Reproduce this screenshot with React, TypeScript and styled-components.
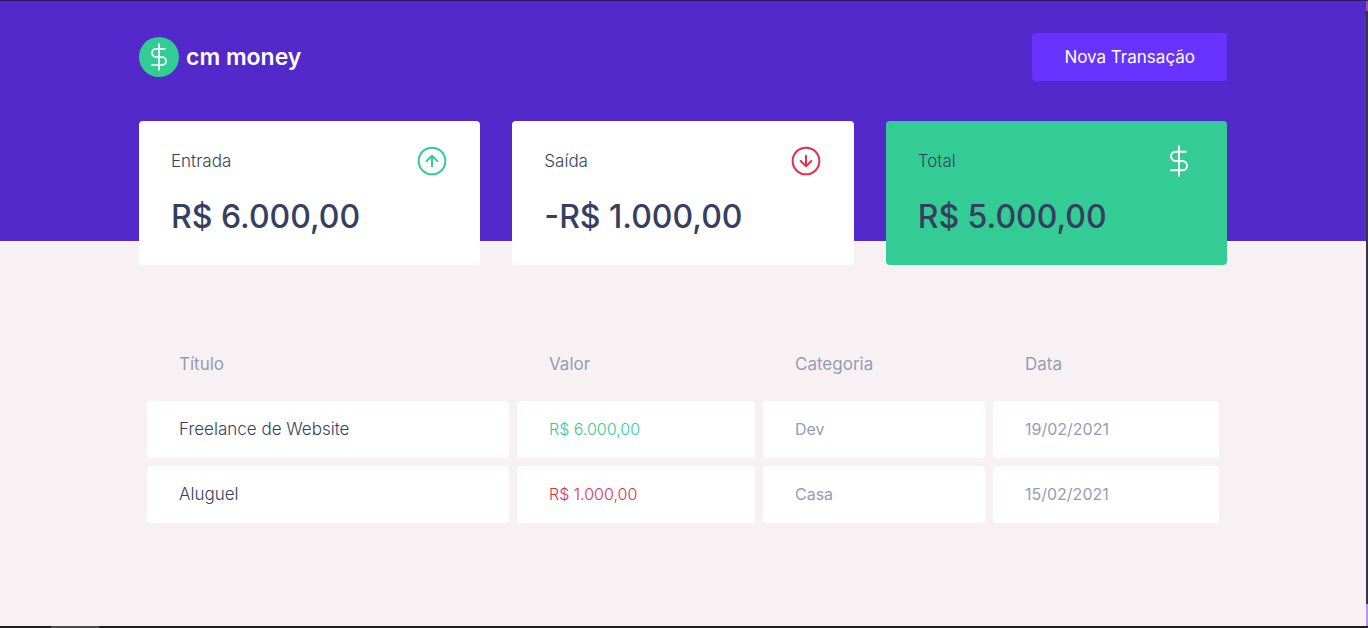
import React from "react";
import styled, { createGlobalStyle } from "styled-components";

const GlobalStyle = createGlobalStyle`
  * {
    margin: 0;
    padding: 0;
    box-sizing: border-box;
  }

  body {
    background: #f7f1f3;
    -webkit-font-smoothing: antialiased;
  }

  body, button {
    font-family: Inter, "Liberation Sans", sans-serif;
    font-size: 17px;
    line-height: 24px;
    font-weight: 400;
  }
`;

const Frame = styled.div`
  display: flex;
  flex-direction: column;
  min-height: 100vh;
`;

const TopEdge = styled.div`
  height: 1px;
  background: #2b1a66;
`;

const Body = styled.div`
  display: flex;
  flex: 1;
`;

const Page = styled.div`
  flex: 1;
  min-width: 0;
`;

const SideRail = styled.div`
  display: flex;
  flex-direction: column;
  width: 2px;
`;

const RailCap = styled.span`
  height: 10px;
  background: #a0509c;
`;

const RailTrack = styled.span`
  flex: 1;
  background: #343648;
`;

const RailEnd = styled.span`
  height: 22px;
  background: #bd93f0;
`;

const BottomEdge = styled.div`
  display: flex;
  height: 2px;
  padding-left: 51px;
  background: #211c1e;
`;

const BottomTab = styled.span`
  width: 48px;
  background: #4f4a4c;
`;

const Header = styled.header`
  background: #5429cc;
`;

const HeaderContent = styled.div`
  display: flex;
  align-items: center;
  justify-content: space-between;
  max-width: 1120px;
  margin: 0 auto;
  padding: 32px 16px 160px;
`;

const Logo = styled.div`
  display: flex;
  align-items: center;
  gap: 7px;
`;

const LogoMark = styled.span`
  display: flex;
  align-items: center;
  justify-content: center;
  width: 40px;
  height: 40px;
  border-radius: 50%;
  background: #33cc95;
  color: #fff;
`;

const LogoName = styled.strong`
  font-size: 23px;
  line-height: 32px;
  font-weight: 600;
  color: #fff;
`;

const NewButton = styled.button`
  height: 48px;
  padding: 0 32px;
  border: 0;
  border-radius: 4px;
  background: #6933ff;
  color: #fff;
  cursor: pointer;
`;

const Main = styled.main`
  max-width: 1120px;
  margin: 0 auto;
  padding: 0 16px 40px;
`;

const Summary = styled.section`
  display: grid;
  grid-template-columns: repeat(3, 1fr);
  gap: 32px;
  margin-top: -120px;
`;

const Card = styled.article<{ $highlight?: boolean }>`
  padding: 24px 32px;
  border-radius: 4px;
  background: ${(p) => (p.$highlight ? "#33cc95" : "#fff")};
  color: #363f5f;
`;

const CardHeader = styled.header`
  display: flex;
  align-items: center;
  justify-content: space-between;
`;

const CardLabel = styled.p`
  font-weight: 300;
`;

const CardValue = styled.strong`
  display: block;
  margin-top: 16px;
  font-size: 32px;
  line-height: 48px;
  font-weight: 500;
`;

const Icon = styled.svg<{ $size: number }>`
  display: block;
  width: ${(p) => p.$size}px;
  height: ${(p) => p.$size}px;
  fill: none;
  stroke: currentColor;
  stroke-width: 1.5;
  stroke-linecap: round;
  stroke-linejoin: round;
`;

const CardIcon = styled.span<{ $color: string }>`
  color: ${(p) => p.$color};
`;

const Table = styled.table`
  width: 100%;
  margin-top: 64px;
  table-layout: fixed;
  border-spacing: 8px;
`;

const Column = styled.col<{ $width: number }>`
  width: ${(p) => p.$width}px;
`;

const HeadCell = styled.th`
  height: 56px;
  padding: 15px 32px 17px;
  color: #969cb3;
  font-weight: 400;
  text-align: left;
  vertical-align: top;
`;

const cellColors = {
  title: "#363f5f",
  text: "#969cb3",
  deposit: "#33cc95",
  withdraw: "#e52e4d",
};

const Cell = styled.td<{ $tone?: keyof typeof cellColors }>`
  height: 57px;
  padding: 16px 32px 17px;
  border-radius: 4px;
  background: #fff;
  color: ${(p) => cellColors[p.$tone ?? "text"]};
  font-size: ${(p) => (p.$tone === "title" ? 17 : 16)}px;
  font-weight: ${(p) => (p.$tone ? 300 : 400)};
  vertical-align: top;
`;

const DollarIcon = ({ size }: { size: number }) => (
  <Icon $size={size} viewBox="0 0 24 24" aria-hidden="true">
    <path d="M12 1v22M17 5H9.5a3.5 3.5 0 0 0 0 7h5a3.5 3.5 0 0 1 0 7H6" />
  </Icon>
);

const UpIcon = () => (
  <Icon $size={32} viewBox="0 0 24 24" aria-hidden="true">
    <circle cx="12" cy="12" r="10" />
    <path d="M16 12l-4-4-4 4M12 16V8" />
  </Icon>
);

const DownIcon = () => (
  <Icon $size={32} viewBox="0 0 24 24" aria-hidden="true">
    <circle cx="12" cy="12" r="10" />
    <path d="M8 12l4 4 4-4M12 8v8" />
  </Icon>
);

const cards = [
  { label: "Entrada", value: "R$ 6.000,00", color: "#33cc95", icon: <UpIcon /> },
  { label: "Saída", value: "-R$ 1.000,00", color: "#e52e4d", icon: <DownIcon /> },
  { label: "Total", value: "R$ 5.000,00", color: "#fff", icon: <DollarIcon size={32} />, highlight: true },
];

const columns = [
  { name: "Título", width: 362 },
  { name: "Valor", width: 238 },
  { name: "Categoria", width: 222 },
  { name: "Data", width: 226 },
];

const transactions = [
  { title: "Freelance de Website", amount: "R$ 6.000,00", type: "deposit", category: "Dev", date: "19/02/2021" },
  { title: "Aluguel", amount: "R$ 1.000,00", type: "withdraw", category: "Casa", date: "15/02/2021" },
] as const;

export default function App() {
  return (
    <Frame>
      <GlobalStyle />
      <TopEdge />
      <Body>
        <Page>
          <Header>
            <HeaderContent>
              <Logo>
                <LogoMark>
                  <DollarIcon size={28} />
                </LogoMark>
                <LogoName>cm money</LogoName>
              </Logo>
              <NewButton type="button">Nova Transação</NewButton>
            </HeaderContent>
          </Header>
          <Main>
            <Summary>
              {cards.map((card) => (
                <Card key={card.label} $highlight={card.highlight}>
                  <CardHeader>
                    <CardLabel>{card.label}</CardLabel>
                    <CardIcon $color={card.color}>{card.icon}</CardIcon>
                  </CardHeader>
                  <CardValue>{card.value}</CardValue>
                </Card>
              ))}
            </Summary>
            <Table>
              <colgroup>
                {columns.map((column) => (
                  <Column key={column.name} $width={column.width} />
                ))}
              </colgroup>
              <thead>
                <tr>
                  {columns.map((column) => (
                    <HeadCell key={column.name} scope="col">
                      {column.name}
                    </HeadCell>
                  ))}
                </tr>
              </thead>
              <tbody>
                {transactions.map((item) => (
                  <tr key={item.title}>
                    <Cell $tone="title">{item.title}</Cell>
                    <Cell $tone={item.type}>{item.amount}</Cell>
                    <Cell>{item.category}</Cell>
                    <Cell>{item.date}</Cell>
                  </tr>
                ))}
              </tbody>
            </Table>
          </Main>
        </Page>
        <SideRail>
          <RailCap />
          <RailTrack />
          <RailEnd />
        </SideRail>
      </Body>
      <BottomEdge>
        <BottomTab />
      </BottomEdge>
    </Frame>
  );
}
